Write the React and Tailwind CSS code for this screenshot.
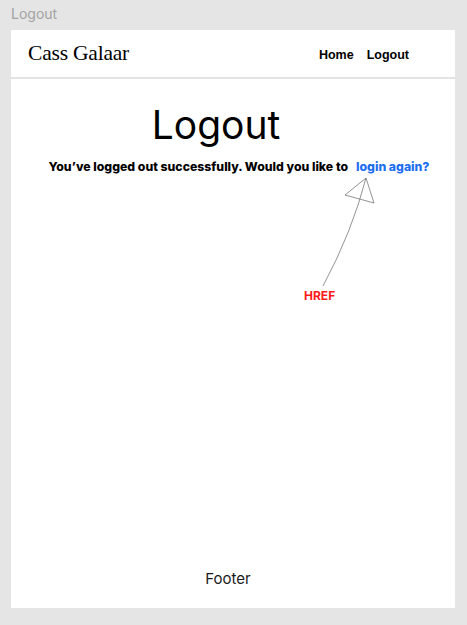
export default function App() {
  return (
    <div className="w-[467px] h-[625px] bg-[#e5e5e5] pl-[11px] pr-[12px] font-['Inter',sans-serif]">
      <div className="h-[30px] pt-[5px] text-[14px] leading-[18px] text-[#a3a3a3]">Logout</div>
      <div className="relative h-[578px] bg-white flex flex-col">
        <header className="h-[49px] border-b-2 border-[#e3e3e3] flex items-center justify-between pl-[17px] pr-[46px]">
          <div className="font-['Liberation_Serif',serif] text-[21.5px] text-black leading-none tracking-[-0.2px]">Cass Galaar</div>
          <nav className="flex gap-[13px] font-['Liberation_Sans',sans-serif] text-[12.5px] font-bold text-black pt-[3px]">
            <a href="#">Home</a>
            <a href="#">Logout</a>
          </nav>
        </header>
        <main className="flex-1 flex flex-col items-center">
          <h1 className="mt-[22px] text-[39px] leading-[48px] font-normal text-black pr-[34px]">Logout</h1>
          <p className="mt-[9px] pl-[12px] text-[12.25px] font-extrabold text-black flex gap-[8px]">
            <span>You’ve logged out successfully. Would you like to</span>
            <a href="#" className="text-[#1a6ef0]">login again?</a>
          </p>
        </main>
        <footer className="h-[43px] text-center text-[15px] text-[#1a1a1a] pt-[3px] pr-[10px]">Footer</footer>

        <svg className="absolute left-0 top-0 pointer-events-none" width="444" height="577" viewBox="11 30 444 577">
          <path d="M323 286 Q352 232 366 178" fill="none" stroke="#777" strokeWidth="0.8" />
          <path d="M366 178 L345 195 L374 203 Z" fill="none" stroke="#777" strokeWidth="0.8" />
        </svg>
        <div className="absolute left-[293px] top-[257px] text-[12px] font-bold text-[#ff1a1a]">HREF</div>
      </div>
    </div>
  );
}
